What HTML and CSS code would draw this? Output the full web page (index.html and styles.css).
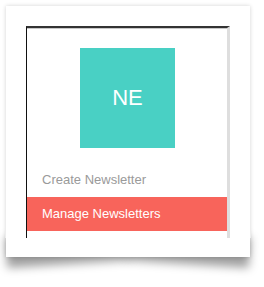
FILE: index.html
```html
<!DOCTYPE html>
<html>
<head>
<meta charset="utf-8">
<link rel="stylesheet" href="styles.css">
</head>
<body>
<div class="page">
  <div class="card">
    <div class="frame">
      <div class="logo">NE</div>
      <ul class="menu">
        <li class="item">Create Newsletter</li>
        <li class="item active">Manage Newsletters</li>
      </ul>
    </div>
  </div>
</div>
</body>
</html>
```

FILE: styles.css
```css
html {
  margin: 0;
  padding: 0;
  background: #fff;
}
body {
  margin: 0;
  font-family: "Liberation Sans", Arial, sans-serif;
}
.page {
  box-sizing: border-box;
  height: 287px;
  padding: 6px 0 0 6px;
  position: relative;
  z-index: 0;
  background: #fff;
}
.card {
  position: relative;
  box-sizing: border-box;
  width: 244px;
  height: 251px;
  padding: 20px 20px 0 20px;
  background: #fff;
  box-shadow: 0 0 4px rgba(0, 0, 0, 0.18);
}
.card::before,
.card::after {
  content: "";
  position: absolute;
  z-index: -1;
  bottom: 14px;
  width: 50%;
  height: 30px;
  background: transparent;
  box-shadow: 0 21px 10px rgba(0, 0, 0, 0.38);
}
.card::before {
  left: -1px;
  transform: rotate(-3.5deg);
}
.card::after {
  right: -1px;
  transform: rotate(3.5deg);
}
.frame {
  box-sizing: border-box;
  height: 212px;
  border-top: 2px solid #333;
  border-left: 1px solid #111;
  border-right: 3px solid #dedede;
  box-shadow: inset 0 1px 0 #c8c8c8;
  padding-top: 20px;
}
.logo {
  width: 95px;
  height: 100px;
  margin: 0 auto 0 53px;
  background: #49d0c4;
  color: #fff;
  font-size: 22px;
  line-height: 100px;
  text-align: center;
}
.menu {
  list-style: none;
  margin: 15px 0 0 0;
  padding: 0;
}
.item {
  height: 34px;
  line-height: 34px;
  padding-left: 15px;
  font-size: 13px;
  color: #9a9a9a;
}
.item.active {
  background: #f8645b;
  color: #fff;
}
```
